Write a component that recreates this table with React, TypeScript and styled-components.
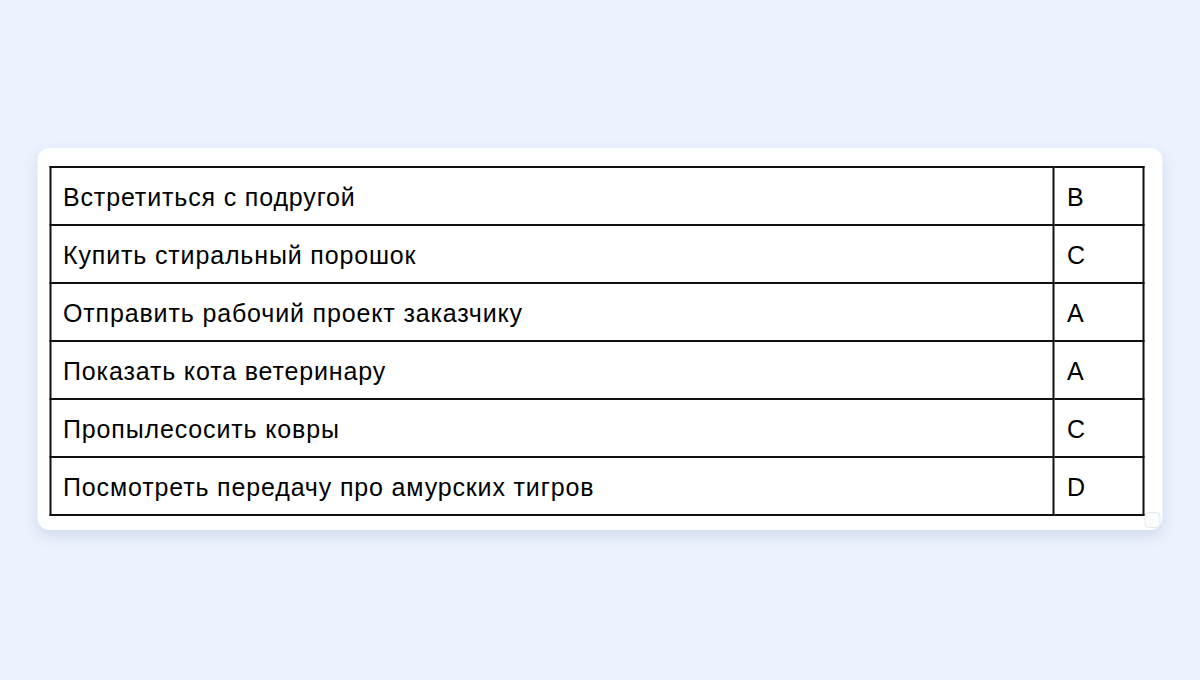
import React from "react";
import styled, { createGlobalStyle } from "styled-components";

const GlobalStyle = createGlobalStyle`
  html, body {
    margin: 0;
    padding: 0;
    background: #ecf3fe;
    font-family: "Liberation Sans", Arial, sans-serif;
  }
`;

const Page = styled.div`
  width: 1200px;
  height: 680px;
  display: flex;
  justify-content: center;
  padding-top: 148px;
  box-sizing: border-box;
`;

const Card = styled.div`
  position: relative;
  width: 1125px;
  height: 382px;
  box-sizing: border-box;
  padding: 18px 18px 16px 12px;
  background: #ffffff;
  border-radius: 12px;
  box-shadow: 0 6px 14px rgba(160, 170, 200, 0.35);
  transform: translateX(-0.5px);
`;

const Table = styled.table`
  width: 1095px;
  border-collapse: collapse;
  border: 2px solid #111;
`;

const Cell = styled.td<{ $narrow?: boolean }>`
  height: 58px;
  box-sizing: border-box;
  padding: 3px 0 0 ${(p) => (p.$narrow ? "13px" : "12px")};
  width: ${(p) => (p.$narrow ? "90px" : "auto")};
  border: 2px solid #111;
  font-size: 25px;
  letter-spacing: 0.85px;
  color: #000;
  vertical-align: middle;
`;

const Grip = styled.div`
  position: absolute;
  right: 2px;
  bottom: 2px;
  width: 14px;
  height: 14px;
  border: 1px solid #e3e6ec;
  border-radius: 4px;
  background: #fafbfc;
`;

const rows: [string, string][] = [
  ["Встретиться с подругой", "B"],
  ["Купить стиральный порошок", "C"],
  ["Отправить рабочий проект заказчику", "A"],
  ["Показать кота ветеринару", "A"],
  ["Пропылесосить ковры", "C"],
  ["Посмотреть передачу про амурских тигров", "D"],
];

const App = (): JSX.Element => {
  return (
    <Page>
      <GlobalStyle />
      <Card>
        <Table>
          <tbody>
            {rows.map(([task, letter]) => (
              <tr key={task}>
                <Cell>{task}</Cell>
                <Cell $narrow>{letter}</Cell>
              </tr>
            ))}
          </tbody>
        </Table>
        <Grip />
      </Card>
    </Page>
  );
};

export default App;
